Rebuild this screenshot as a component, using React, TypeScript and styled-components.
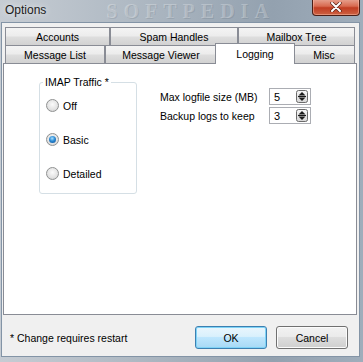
import React from "react";
import styled, {createGlobalStyle, css} from "styled-components";

const GlobalStyle = createGlobalStyle`
    html, body {
        margin: 0;
        padding: 0;
        background: #ffffff;
    }
    body {
        font-family: "Liberation Sans", Arial, sans-serif;
        font-size: 10.5px;
        color: #000;
    }
`;

const Window = styled.div`
    width: 363px;
    height: 362px;
    box-sizing: border-box;
    padding: 0 3px 5px 1px;
    display: flex;
    flex-direction: column;
    background: linear-gradient(90deg, #c6ccd3 0%, #b0bac4 35%, #93a1af 75%, #9fadbb 100%);
    overflow: hidden;
`;

const TitleBar = styled.div`
    height: 22px;
    display: flex;
    align-items: flex-start;
    padding-left: 4px;
`;

const Title = styled.div`
    font-size: 12px;
    line-height: 20px;
    color: #1b1b1b;
    text-shadow: 0 0 6px rgba(255, 255, 255, 0.9);
`;

const Watermark = styled.div`
    font-family: "Liberation Serif", serif;
    font-weight: bold;
    font-size: 20px;
    line-height: 22px;
    letter-spacing: 6px;
    margin-left: 60px;
    color: rgba(255, 255, 255, 0.26);
    text-shadow: 1px 1px 0 rgba(60, 70, 80, 0.12);
`;

const CloseButton = styled.div`
    margin-left: auto;
    width: 48px;
    height: 17px;
    margin-top: -1px;
    box-sizing: border-box;
    border: 1px solid #4a1e16;
    border-top: none;
    border-radius: 0 0 4px 4px;
    background: linear-gradient(#e8a593 0%, #d86a50 45%, #c13d22 55%, #cc6243 100%);
    box-shadow: inset 0 0 0 1px rgba(255, 200, 180, 0.45);
    display: flex;
    align-items: center;
    justify-content: center;
`;

const Client = styled.div`
    flex: 1;
    display: flex;
    flex-direction: column;
    background: #f0f0f0;
    border: 1px solid #8394a6;
`;

const TabStrip = styled.div`
    margin-top: 4px;
    padding: 0 4px 0 3px;
    display: flex;
    flex-direction: column;
`;

const TabRow = styled.div`
    display: flex;
    align-items: flex-end;
    height: 18px;
`;

const Tab = styled.div<{$w: number; $active?: boolean}>`
    box-sizing: border-box;
    width: ${p => p.$w}px;
    height: 18px;
    border: 1px solid #898c95;
    border-bottom: none;
    background: linear-gradient(#f4f4f4 0%, #ececec 48%, #dedede 52%, #d2d2d2 100%);
    display: flex;
    align-items: center;
    justify-content: center;
    padding-top: 1px;
    white-space: nowrap;
    ${p => p.$active && css`
        width: ${p.$w + 4}px;
        height: 21px;
        margin: 0 -2px -1px;
        padding-top: 0;
        background: #ffffff;
        position: relative;
        z-index: 1;
    `}
`;

const Panel = styled.div`
    height: 252px;
    box-sizing: border-box;
    margin: 0 2px 0 1px;
    background: #ffffff;
    border: 1px solid #898c95;
    display: flex;
    align-items: flex-start;
    padding: 18px 0 0 35px;
`;

const GroupBox = styled.div`
    position: relative;
    width: 98px;
    height: 112px;
    box-sizing: border-box;
    border: 1px solid #d5dfe5;
    border-radius: 3px;
    padding: 16px 0 0 6px;
`;

const Legend = styled.div`
    position: absolute;
    top: -7px;
    left: 3px;
    padding: 0 2px;
    background: #ffffff;
    line-height: 13px;
`;

const RadioList = styled.div`
    display: flex;
    flex-direction: column;
    gap: 21px;
`;

const RadioRow = styled.label`
    display: flex;
    align-items: center;
    gap: 4px;
    height: 13px;
`;

const RadioDot = styled.span<{$checked?: boolean}>`
    width: 13px;
    height: 13px;
    box-sizing: border-box;
    border-radius: 50%;
    border: 1px solid #8f9191;
    background: radial-gradient(circle at 50% 40%, #fbfbfb 0%, #e2e2e2 60%, #c9c9c9 100%);
    display: flex;
    align-items: center;
    justify-content: center;
    &::after {
        content: "";
        width: 7px;
        height: 7px;
        border-radius: 50%;
        display: ${p => (p.$checked ? "block" : "none")};
        background: radial-gradient(circle at 45% 35%, #a9e0ff 0%, #2b8ad4 45%, #0b4c93 100%);
    }
`;

const Settings = styled.div`
    margin-left: 23px;
    margin-top: 6px;
    display: flex;
    flex-direction: column;
    gap: 2px;
`;

const SettingRow = styled.div`
    display: flex;
    align-items: center;
`;

const SettingLabel = styled.div`
    width: 109px;
`;

const SpinBox = styled.div`
    width: 42px;
    height: 17px;
    box-sizing: border-box;
    border: 1px solid #abadb3;
    background: #fff;
    display: flex;
    align-items: center;
    padding: 0 2px 0 4px;
    font-size: 11px;
`;

const SpinValue = styled.span`
    flex: 1;
`;

const Footer = styled.div`
    flex: 1;
    display: flex;
    align-items: center;
    padding: 4px 11px 0 8px;
`;

const Note = styled.div`
    flex: 1;
`;

const DialogButton = styled.button<{$default?: boolean}>`
    width: 72px;
    height: 23px;
    margin-left: 9px;
    font-family: "Liberation Sans", Arial, sans-serif;
    font-size: 10.5px;
    color: #000;
    border-radius: 3px;
    border: 1px solid #707070;
    background: linear-gradient(#f2f2f2 0%, #ebebeb 45%, #dddddd 50%, #cfcfcf 100%);
    box-shadow: inset 0 0 0 1px #fbfbfb;
    padding: 0;
    ${p => p.$default && css`
        border-color: #3c7fb1;
        background: linear-gradient(#eaf6fd 0%, #d9f0fc 45%, #bee6fd 50%, #a7d9f5 100%);
        box-shadow: inset 0 0 0 1px #7fd3f6;
    `}
`;

const SpinArrows: React.FC = () => (
    <svg width="12" height="13" viewBox="0 0 12 13">
        <defs>
            <linearGradient id="sg" x1="0" y1="0" x2="0" y2="1">
                <stop offset="0" stopColor="#f6f6f6"/>
                <stop offset="1" stopColor="#d6d6d6"/>
            </linearGradient>
        </defs>
        <rect x="0.5" y="0.5" width="11" height="12" rx="2" fill="url(#sg)" stroke="#6b6b6b"/>
        <polygon points="2.5,5.5 9.5,5.5 6,2" fill="#1a1a1a"/>
        <line x1="2" y1="6.5" x2="10" y2="6.5" stroke="#1a1a1a"/>
        <polygon points="2.5,7.5 9.5,7.5 6,11" fill="#1a1a1a"/>
    </svg>
);

const radios = [
    {label: "Off", checked: false},
    {label: "Basic", checked: true},
    {label: "Detailed", checked: false},
];

export default function App() {
    return (
        <>
            <GlobalStyle/>
            <Window>
                <TitleBar>
                    <Title>Options</Title>
                    <Watermark>SOFTPEDIA</Watermark>
                    <CloseButton>
                        <svg width="12" height="10" viewBox="0 0 12 10">
                            <path d="M2 1 L10 9 M10 1 L2 9" stroke="#5a2318" strokeWidth="3.4" strokeLinecap="round"/>
                            <path d="M2 1 L10 9 M10 1 L2 9" stroke="#ffffff" strokeWidth="2" strokeLinecap="round"/>
                        </svg>
                    </CloseButton>
                </TitleBar>
                <Client>
                    <TabStrip>
                        <TabRow>
                            <Tab $w={105}>Accounts</Tab>
                            <Tab $w={128}>Spam Handles</Tab>
                            <Tab $w={117}>Mailbox Tree</Tab>
                        </TabRow>
                        <TabRow>
                            <Tab $w={100}>Message List</Tab>
                            <Tab $w={112}>Message Viewer</Tab>
                            <Tab $w={76} $active>Logging</Tab>
                            <Tab $w={62}>Misc</Tab>
                        </TabRow>
                    </TabStrip>
                    <Panel>
                        <GroupBox>
                            <Legend>IMAP Traffic *</Legend>
                            <RadioList>
                                {radios.map(r => (
                                    <RadioRow key={r.label}>
                                        <RadioDot $checked={r.checked}/>
                                        {r.label}
                                    </RadioRow>
                                ))}
                            </RadioList>
                        </GroupBox>
                        <Settings>
                            <SettingRow>
                                <SettingLabel>Max logfile size (MB)</SettingLabel>
                                <SpinBox>
                                    <SpinValue>5</SpinValue>
                                    <SpinArrows/>
                                </SpinBox>
                            </SettingRow>
                            <SettingRow>
                                <SettingLabel>Backup logs to keep</SettingLabel>
                                <SpinBox>
                                    <SpinValue>3</SpinValue>
                                    <SpinArrows/>
                                </SpinBox>
                            </SettingRow>
                        </Settings>
                    </Panel>
                    <Footer>
                        <Note>* Change requires restart</Note>
                        <DialogButton $default>OK</DialogButton>
                        <DialogButton>Cancel</DialogButton>
                    </Footer>
                </Client>
            </Window>
        </>
    );
}
